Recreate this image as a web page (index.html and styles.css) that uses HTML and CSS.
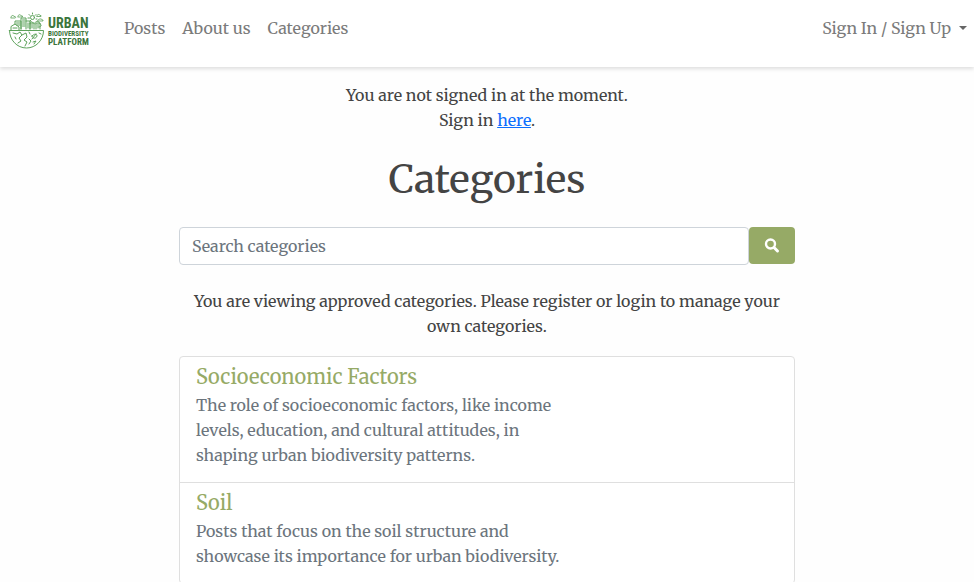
FILE: index.html
```html
<!DOCTYPE html>
<html lang="en">
<head>
<meta charset="utf-8">
<meta name="viewport" content="width=device-width, initial-scale=1">
<title>Categories</title>
<link rel="stylesheet" href="styles.css">
</head>
<body>
<header class="navbar">
  <a class="brand" href="#" aria-label="Urban Biodiversity Platform">
    <svg class="brand-mark" viewBox="0 0 38 38" fill="none" stroke="#5da25b" stroke-width="1" stroke-linecap="round" stroke-linejoin="round" aria-hidden="true">
      <path d="M1.5 18.500H35.500C35.500 28 28 36 18.500 36S1.500 28 1.500 18.500Z"/>
      <path d="M3 18V14.500L7 12L11 15V18M7 12V9H13V17M13 17V6H18V17M18 9H22V17M22 17V11H26V17M28 17V11H32V17"/>
      <path d="M14.500 8H17M14.500 10H17M14.500 12H17M14.500 14H17M8.500 11H12M8.500 13H12M20 11V16M24 12V16M30 12V16M5 16H9"/>
      <path d="M22 12C21 9 25 9 25 11M27 12C26 9 31 8 32 12C34 13 33 15 31 15"/>
      <circle cx="24.500" cy="5.500" r="2"/>
      <path d="M24.500 1V2M21 2.500L22 3.500M28 2.500L27 3.500M20 6H21.500M28 7H29M22 9L23 8"/>
      <path d="M3 5C3 3 6 3 6 4.500C8 4 8 6 7 6H3ZM10 4C10 2.500 13 2 13 4H14.500V5H10ZM29 3.500C29 2 32 2 32 3.500H33V4.500H29ZM30 8C31 6.500 34 6.500 34 8H35V9H30Z" stroke-width=".8"/>
      <path d="M5 21L9 22L12 20L14 23L11 26L13 29L10 31M14 23L18 21L19 25L16 28L19 30L17 34M24 24C27 21 29 22 29 24C28 27 25 27 24 24ZM24 27L28 22M21 20L22 22M31 21L33 22M25 30L28 29L26 32M7 25L8 27M21 27L23 29L21 32"/>
    </svg>
    <span class="brand-text">
      <span class="brand-large">URBAN</span>
      <span class="brand-small">BIODIVERSITY</span>
      <span class="brand-medium">PLATFORM</span>
    </span>
  </a>
  <nav class="nav-links" aria-label="Main">
    <a href="#">Posts</a>
    <a href="#">About us</a>
    <a href="#">Categories</a>
  </nav>
  <button class="account" type="button">Sign In / Sign Up <span class="caret"></span></button>
</header>
<main class="content">
  <p class="notice">You are not signed in at the moment.<br>Sign in <a href="#">here</a>.</p>
  <h1>Categories</h1>
  <form class="search" role="search">
    <input type="search" placeholder="Search categories" aria-label="Search categories">
    <button type="button" aria-label="Search">
      <svg viewBox="0 0 16 16" fill="none" stroke="currentColor" aria-hidden="true"><circle cx="6.500" cy="6" r="4.500" stroke-width="2.400"/><path d="M10 9.500L13.500 13" stroke-width="3" stroke-linecap="round"/></svg>
    </button>
  </form>
  <p class="notice">You are viewing approved categories. Please register or login to manage your own categories.</p>
  <ul class="category-list">
    <li>
      <h2><a href="#">Socioeconomic Factors</a></h2>
      <p>The role of socioeconomic factors, like income levels, education, and cultural attitudes, in shaping urban biodiversity patterns.</p>
    </li>
    <li>
      <h2><a href="#">Soil</a></h2>
      <p>Posts that focus on the soil structure and showcase its importance for urban biodiversity.</p>
    </li>
  </ul>
</main>
</body>
</html>
```
FILE: styles.css
```css
* { box-sizing: border-box; }
html { overflow-x: hidden; scrollbar-width: none; }
body {
  margin: 0;
  background: #fefefe;
  color: #444;
  font-family: Merriweather, "DejaVu Serif Condensed", "DejaVu Serif", serif;
  font-size: 16px;
  line-height: 25px;
}
.navbar {
  display: flex;
  align-items: center;
  height: 67px;
  padding: 0 7px 11px 8px;
  background: #fff;
  box-shadow: 0 2px 4px rgba(0, 0, 0, .13);
}
.brand {
  display: flex;
  align-items: center;
  gap: 2px;
  padding-top: 6px;
  color: #3b753b;
  text-decoration: none;
}
.brand-mark { width: 38px; height: 38px; }
.brand-text {
  display: flex;
  flex-direction: column;
  width: 40px;
  font-family: "Roboto Condensed", "Open Sans Condensed", Roboto, sans-serif;
  font-weight: 700;
  white-space: nowrap;
}
.brand-large { font-size: 14px; line-height: 14px; }
.brand-small { font-size: 7px; line-height: 8px; }
.brand-medium { font-size: 9px; line-height: 9px; }
.nav-links { display: flex; gap: 17px; margin-left: 36px; }
.nav-links a, .account { color: #7b7b7b; text-decoration: none; }
.account {
  display: flex;
  align-items: center;
  gap: 8px;
  margin-left: auto;
  padding: 0;
  border: 0;
  background: none;
  font: inherit;
}
.caret { border: 4px solid transparent; border-top-color: #666; border-bottom: 0; }
.content { max-width: 640px; margin: 0 auto; padding: 16px 12px; }
p { margin: 0; }
.notice { text-align: center; }
.notice a { color: #0d6efd; }
h1 {
  margin: 22px 0;
  font-size: 39px;
  font-weight: 400;
  line-height: 50px;
  text-align: center;
}
.search { display: flex; margin-bottom: 24px; }
.search input {
  flex: 1;
  min-width: 0;
  height: 38px;
  padding: 0 12px;
  border: 1px solid #ced4da;
  border-radius: 4px;
  background: #fff;
  color: #444;
  font: inherit;
}
.search input::placeholder { color: #6c757d; opacity: 1; }
.search button {
  display: grid;
  place-items: center;
  width: 46px;
  height: 37px;
  padding: 0;
  border: 0;
  border-radius: 4px;
  background: #96aa66;
  color: #fff;
}
.search svg { width: 16px; height: 16px; }
.category-list {
  margin: 17px 0 0;
  padding: 0;
  border: 1px solid #dfdfdf;
  border-radius: 4px;
  background: #fff;
  list-style: none;
}
.category-list li { padding: 7px 16px 14px; }
.category-list li + li { border-top: 1px solid #dfdfdf; }
h2 { margin: 0 0 4px; font-size: 20px; font-weight: 400; line-height: 25px; }
h2 a { color: #96aa66; text-decoration: none; }
.category-list p { max-width: 380px; color: #6c757d; }
```
